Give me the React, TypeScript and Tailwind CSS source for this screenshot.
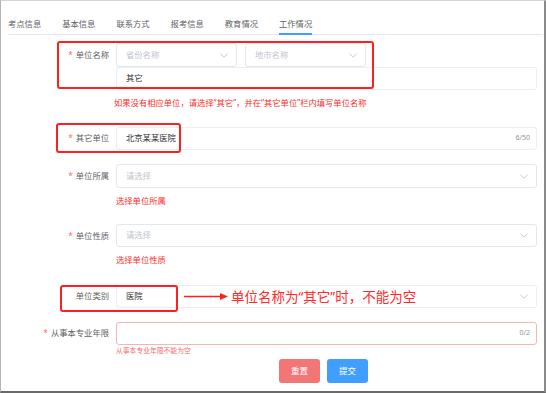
import React from "react";

const Chevron = () => (
    <svg width="8" height="5" viewBox="0 0 8 5" fill="none">
        <path d="M0.5 0.8 L4 4.2 L7.5 0.8" stroke="#c0c4cc" strokeWidth="0.9" />
    </svg>
);

// 下拉框
const Select = ({ text, value, className }: { text: string; value?: boolean; className?: string }) => (
    <div className={`flex items-center justify-between border border-[#e4e7ed] rounded-[3px] pl-[9px] pr-[8px] ${className ?? ""}`}>
        <span className={value ? "text-[#303133]" : "text-[#c0c4cc]"}>{text}</span>
        <Chevron />
    </div>
);

const Label = ({ text, required = true, h = "h-[24px]" }: { text: string; required?: boolean; h?: string }) => (
    <div className={`w-[100px] shrink-0 flex items-center justify-end text-[#606266] ${h}`}>
        {required && <span className="text-[#f56c6c] mr-[3px]">*</span>}
        {text}
    </div>
);

function App() {
    const tabs = ["考点信息", "基本信息", "联系方式", "报考信息", "教育情况", "工作情况"];

    return (
        <div
            className="relative w-[546px] h-[393px] bg-white border-t border-l border-t-[#d4d4d4] border-l-[#b4b4b4] border-r-2 border-b-2 border-r-[#8a8a8a] border-b-[#6a6a6a] text-[8.3px] overflow-hidden"
            style={{ fontFamily: '"Noto Sans", "Noto Sans CJK SC", sans-serif' }}
        >
            {/* タブ */}
            <div className="mt-[13px] ml-[7px] mr-[1px] flex gap-[21px] border-b border-[#e4e7ed]">
                {tabs.map((t, i) => (
                    <div
                        key={t}
                        className={`relative h-[20px] leading-[20px] text-[#606266] ${i === 5 ? "text-[#409eff]" : ""}`}
                    >
                        {t}
                        {i === 5 && <div className="absolute left-0 right-0 bottom-[-1px] h-[2px] bg-[#409eff]" />}
                    </div>
                ))}
            </div>

            <div className="pl-[8px]">
                {/* 単位名称 */}
                <div className="mt-[8px] flex">
                    <Label text="单位名称" />
                    <div className="ml-[7px] w-[421px]">
                        <div className="flex gap-[8px]">
                            <Select text="省份名称" className="w-[121px] h-[24px]" />
                            <Select text="地市名称" className="w-[121px] h-[24px]" />
                        </div>
                        <div className="h-[23px] w-[421px] border border-[#eceef2] rounded-[3px] flex items-center pl-[9px] text-[#303133]">
                            其它
                        </div>
                        <div className="mt-[7px] leading-[12px] text-[#ff2b2b] -ml-[2px]">
                            如果没有相应单位，请选择“其它”，并在“其它单位”栏内填写单位名称
                        </div>
                    </div>
                </div>

                {/* 其它単位 */}
                <div className="mt-[18px] flex">
                    <Label text="其它单位" h="h-[23px]" />
                    <div className="ml-[7px] w-[421px] h-[23px] border border-[#eceef2] rounded-[3px] flex items-center justify-between pl-[9px] pr-[6px]">
                        <span className="text-[#303133]">北京某某医院</span>
                        <span className="text-[#909399] text-[7px]">6/50</span>
                    </div>
                </div>

                {/* 単位所属 */}
                <div className="mt-[14px] flex">
                    <Label text="单位所属" />
                    <div className="ml-[7px] w-[421px]">
                        <Select text="请选择" className="h-[24px]" />
                        <div className="mt-[7px] leading-[12px] text-[#ff2b2b]">选择单位所属</div>
                    </div>
                </div>

                {/* 単位性質 */}
                <div className="mt-[17px] flex">
                    <Label text="单位性质" />
                    <div className="ml-[7px] w-[421px]">
                        <Select text="请选择" className="h-[23px]" />
                        <div className="mt-[7px] leading-[12px] text-[#ff2b2b]">选择单位性质</div>
                    </div>
                </div>

                {/* 単位類別 */}
                <div className="mt-[19px] flex">
                    <Label text="单位类别" required={false} h="h-[23px]" />
                    <div className="ml-[7px] w-[421px] h-[23px] flex items-center justify-between border border-[#eceef2] rounded-[3px] pl-[9px] pr-[8px]">
                        <span className="text-[#303133]">医院</span>
                        <Chevron />
                    </div>
                </div>

                {/* 従事年限 */}
                <div className="mt-[14px] flex">
                    <Label text="从事本专业年限" h="h-[23px]" />
                    <div className="ml-[7px] w-[421px]">
                        <div className="h-[23px] border border-[#f8b4b4] rounded-[3px] flex items-center justify-end pr-[6px] text-[7px] text-[#909399]">
                            0/2
                        </div>
                        <div className="mt-[1px] leading-[9px] text-[6.8px] text-[#f56c6c]">从事本专业年限不能为空</div>
                    </div>
                </div>

                {/* ボタン */}
                <div className="mt-[4px] ml-[107px] w-[421px] flex justify-center gap-[7px] pr-[6px]">
                    <button className="w-[41px] h-[24px] rounded-[3px] bg-[#f37676] text-white text-[8.5px]">重置</button>
                    <button className="w-[41px] h-[24px] rounded-[3px] bg-[#409eff] text-white text-[8.5px]">提交</button>
                </div>
            </div>

            {/* 注釈 */}
            <div className="absolute left-[56px] top-[40px] w-[317px] h-[48px] border-2 border-[#ff1f1f] rounded-[3px]" />
            <div className="absolute left-[55px] top-[122px] w-[125px] h-[30px] border-2 border-[#ff1f1f] rounded-[3px]" />
            <div className="absolute left-[59px] top-[284px] w-[118px] h-[27px] border-2 border-[#ff1f1f] rounded-[3px]" />
            <svg className="absolute left-[182px] top-[291px]" width="46" height="9" viewBox="0 0 46 9">
                <line x1="1" y1="4.5" x2="38" y2="4.5" stroke="#ff2020" strokeWidth="1.5" />
                <path d="M37 1 L45 4.5 L37 8 Z" fill="#ff2020" />
            </svg>
            <div className="absolute left-[230px] top-[286px] text-[13.5px] leading-[20px] text-[#ff2a2a]">
                单位名称为“其它”时，不能为空
            </div>
        </div>
    );
}

export default App;
